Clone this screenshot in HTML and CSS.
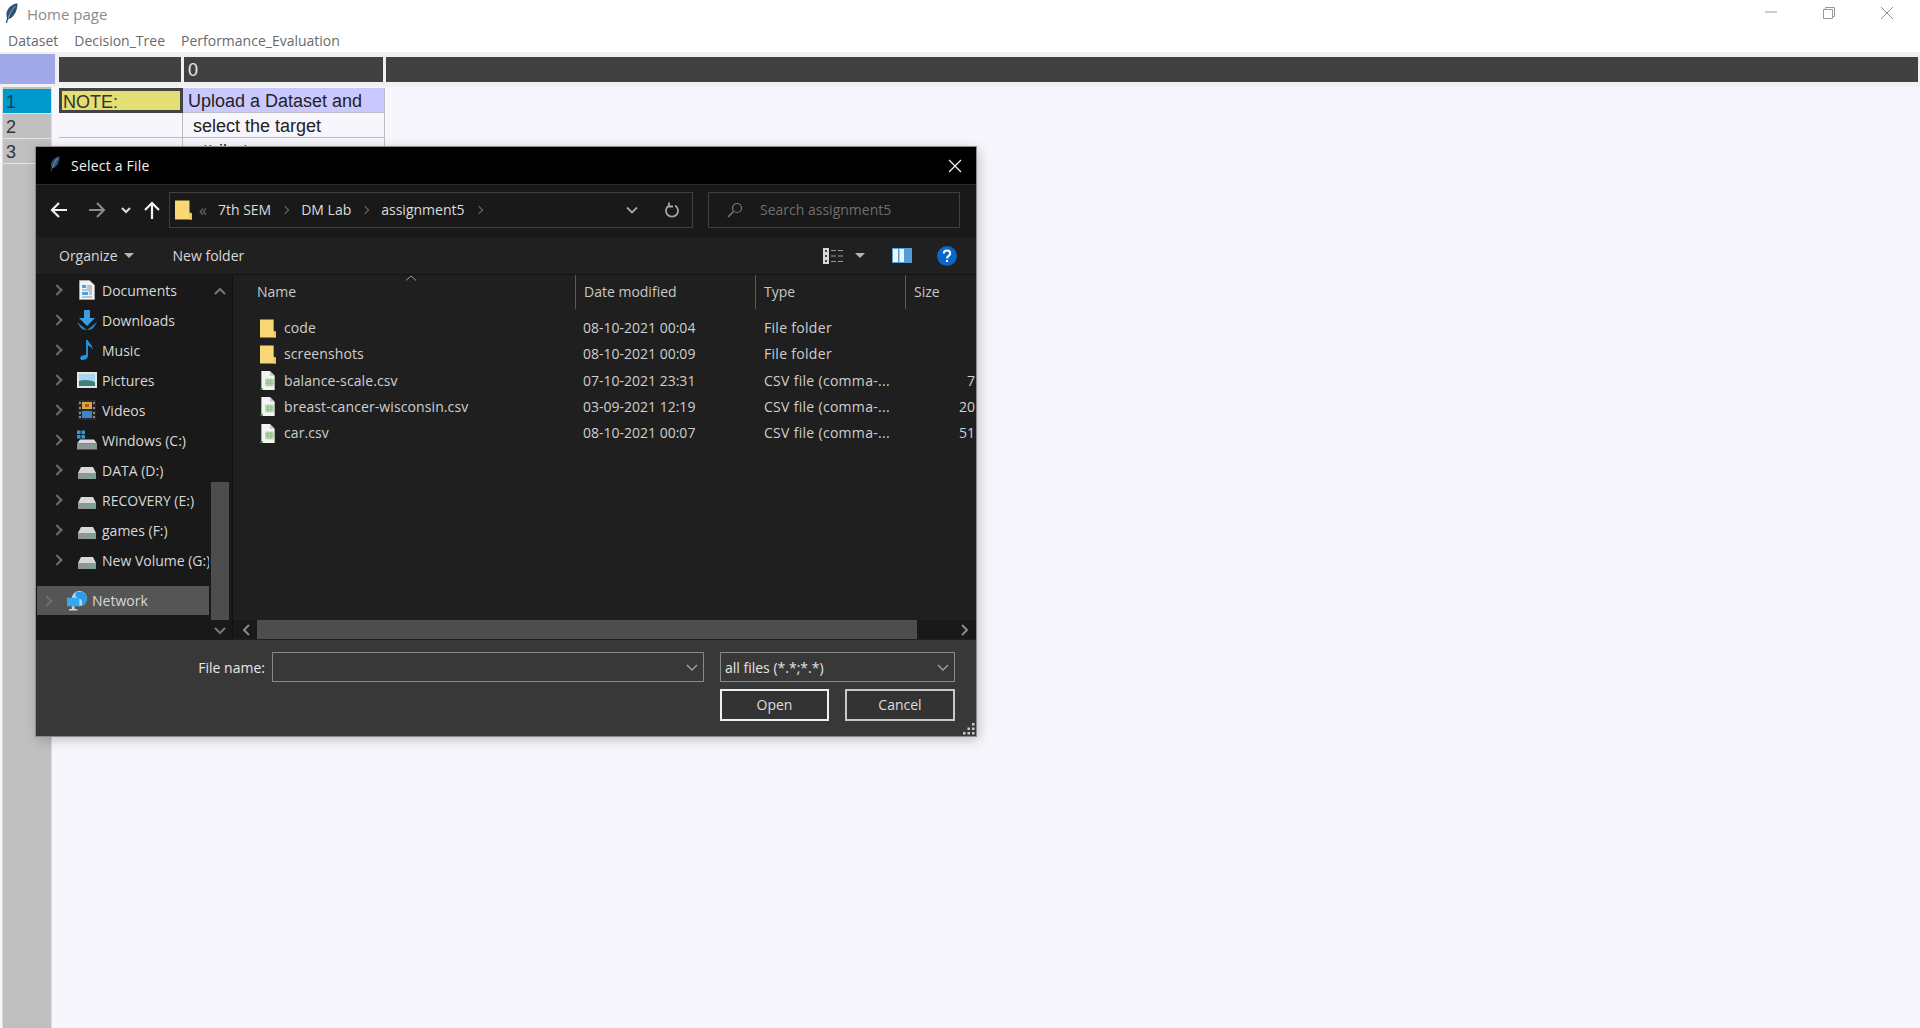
FILE: index.html
```html
<!DOCTYPE html>
<html lang="en">
  <head>
    <meta charset="utf-8">
    <title>Home page</title>
    <link rel="stylesheet" href="styles.css">
  </head>
  <body>
    <svg class="defs" width="0" height="0">
      <symbol id="feather" viewBox="0 0 14 22">
        <path d="M13.500 0C7 1 1.500 6 1.500 12c0 1.500.3 3 .7 4L.8 21l1.200.5L3.500 17C9.500 16 13.500 8 13.500 0z" fill="#2f5178"/>
        <path d="M11 3C8 6 5 11 3.500 16" stroke="#a9c6de" stroke-width=".8" fill="none"/>
      </symbol>
      <symbol id="folder" viewBox="0 0 17 19">
        <path d="M0 0h14.500l0 12 2.500 1v6H0z" fill="#f8d775"/>
        <path d="M14.500 12l2.500 1v6h-2.500z" fill="#eec55c"/>
      </symbol>
      <symbol id="csv" viewBox="0 0 16 20">
        <path d="M1 0h9l5 5v15H1z" fill="#f4f4f4"/>
        <path d="M10 0l5 5h-5z" fill="#c9c9c9"/>
        <path d="M5 8h9v8H5z" fill="#bcdcb4"/>
        <path d="M5 10.500h9M5 13h9M8 8v8M11 8v8" stroke="#7fb477" stroke-width=".7"/>
        <path d="M0 18h2.500v2H0z" fill="#2f8b3c"/>
      </symbol>
      <symbol id="doc" viewBox="0 0 16 20">
        <path d="M.5.500h10l5 4.500v14.500H.5z" fill="#f2f2f2" stroke="#b9b9b9" stroke-width=".6"/>
        <path d="M3 5h4v3H3zM3 12h6v3H3z" fill="#4aa3e0"/>
        <path d="M8 6h5M8 8h5M3 10h10M10 12h3M10 14h3M3 17h10" stroke="#6a8ba8" stroke-width=".9"/>
      </symbol>
      <symbol id="down" viewBox="0 0 20 20">
        <path d="M7 0h6v8h5l-8 8-8-8h5z" fill="#3b9de4"/>
        <path d="M0 12l3 5c1.500 2 3 3 7 3s5.500-1 7-3l3-5-10 8z" fill="#2b83cc"/>
      </symbol>
      <symbol id="music" viewBox="0 0 16 22">
        <path d="M7 0h2c.5 4 6 5 5 11-.5-3-3-4.500-5-5v12c0 2-2.500 4-5.500 4S0 20 1 18.500 4.500 16 7 16.500z" fill="#1e97e8"/>
      </symbol>
      <symbol id="pic" viewBox="0 0 20 16">
        <path d="M0 0h20v16H0z" fill="#e6e6e6"/>
        <path d="M2 2h16v12H2z" fill="#a9d3ee"/>
        <path d="M2 9c5-2 11-1 16 1v4H2z" fill="#3f7f7a"/>
      </symbol>
      <symbol id="video" viewBox="0 0 18 20">
        <path d="M0 0h18v20H0z" fill="#26282c"/>
        <path d="M4 2h10v7H4z" fill="#d8a93a"/>
        <path d="M4 11h10v7H4z" fill="#3a86c9"/>
        <path d="M7 4h4v3H7z" fill="#b8532f"/>
        <path d="M1 2h2v2H1zM1 7h2v2H1zM1 12h2v2H1zM1 16h2v2H1zM15 2h2v2h-2zM15 7h2v2h-2zM15 12h2v2h-2zM15 16h2v2h-2z" fill="#8a8a8a"/>
      </symbol>
      <symbol id="drive" viewBox="0 0 18 12">
        <path d="M3 0h12l3 6H0z" fill="#d8d8d8"/>
        <path d="M0 6h18v6H0z" fill="#8f9698"/>
        <path d="M12 8h3v2h-3z" fill="#35d06a"/>
      </symbol>
      <symbol id="drivec" viewBox="0 0 20 19">
        <path d="M0 0h3.500v3.500H0zM4.500 0H8v3.500H4.500zM0 4.500h3.500V8H0zM4.500 4.500H8V8H4.500z" fill="#21a0e8"/>
        <path d="M3 9h14l3 4H0z" fill="#dcdcdc"/>
        <path d="M0 13h20v6H0z" fill="#8f9698"/>
        <path d="M14 15h3v2h-3z" fill="#35d06a"/>
      </symbol>
      <symbol id="network" viewBox="0 0 21 21">
        <circle cx="13" cy="8" r="8" fill="#a9d9f5"/>
        <path d="M10 1c-2 3-1 5 1 6s5 1 5 5-2 3-3 4c4 0 8-3 8-8 0-3-2-6-5-7z" fill="#2f9ae6"/>
        <path d="M0 7h13v9H0z" fill="#37a7ee"/>
        <path d="M5 16h3v3h3v1.500H2V19h3z" fill="#c9d3da"/>
      </symbol>
    </svg>

    <div class="titlebar">
      <div class="titlebar-left">
        <svg class="app-icon"><use href="#feather"/></svg>
        <span>Home page</span>
      </div>
      <div class="win-controls">
        <svg width="14" height="14" viewBox="0 0 14 14"><path d="M1 6h12" stroke="#9a9a9a"/></svg>
        <svg width="14" height="14" viewBox="0 0 14 14"><path d="M1.500 3.500h9v9h-9zM3.500 3.500v-2h9v9h-2" fill="none" stroke="#9a9a9a"/></svg>
        <svg width="14" height="14" viewBox="0 0 14 14"><path d="M1 1l12 12M13 1L1 13" stroke="#8c8c8c"/></svg>
      </div>
    </div>

    <div class="menubar">
      <span>Dataset</span>
      <span>Decision_Tree</span>
      <span>Performance_Evaluation</span>
    </div>

    <div class="sheet">
      <div class="sheet-head">
        <div class="corner"></div>
        <div class="col-head col-a"></div>
        <div class="col-head col-b">0</div>
        <div class="col-head col-rest"></div>
      </div>
      <div class="sheet-body">
        <div class="row-index">
          <div class="idx idx-active">1</div>
          <div class="idx">2</div>
          <div class="idx">3</div>
        </div>
        <div class="cells">
          <div class="cell-row">
            <div class="cell cell-a cell-note"><span>NOTE:</span></div>
            <div class="cell cell-b cell-lav">Upload a Dataset and</div>
          </div>
          <div class="cell-row">
            <div class="cell cell-a"></div>
            <div class="cell cell-b cell-indent">select the target</div>
          </div>
          <div class="cell-row">
            <div class="cell cell-a"></div>
            <div class="cell cell-b cell-indent">attribute</div>
          </div>
        </div>
      </div>
    </div>

    <div class="dialog">
      <div class="dlg-title">
        <svg class="dlg-feather"><use href="#feather"/></svg>
        <span class="dlg-title-text">Select a File</span>
        <svg class="dlg-close" width="14" height="14" viewBox="0 0 14 14"><path d="M1 1l12 12M13 1L1 13" stroke="#fff" stroke-width="1.100"/></svg>
      </div>

      <div class="dlg-address">
        <div class="nav-btns">
          <svg width="18" height="16" viewBox="0 0 18 16"><path d="M9 1L2 8l7 7M2 8h15" fill="none" stroke="#f2f2f2" stroke-width="2.200"/></svg>
          <svg class="btn-off" width="18" height="16" viewBox="0 0 18 16"><path d="M9 1l7 7-7 7M16 8H1" fill="none" stroke="#8c8c8c" stroke-width="2"/></svg>
          <svg class="btn-more" width="10" height="8" viewBox="0 0 10 8"><path d="M1 2l4 4 4-4" fill="none" stroke="#ddd" stroke-width="2"/></svg>
          <svg class="btn-up" width="16" height="18" viewBox="0 0 16 18"><path d="M1 9l7-7 7 7M8 2v16" fill="none" stroke="#f2f2f2" stroke-width="2.200"/></svg>
        </div>
        <div class="pathbox">
          <svg class="path-folder"><use href="#folder"/></svg>
          <span class="crumb-first">«</span>
          <span class="crumb">7th SEM</span>
          <i class="crumb-chev"></i>
          <span class="crumb">DM Lab</span>
          <i class="crumb-chev"></i>
          <span class="crumb">assignment5</span>
          <i class="crumb-chev"></i>
          <svg class="path-drop" width="12" height="8" viewBox="0 0 12 8"><path d="M1 1.500l5 5 5-5" fill="none" stroke="#a5a5a5" stroke-width="1.800"/></svg>
          <svg class="path-refresh" width="14" height="16" viewBox="0 0 14 16"><path d="M4 3.500a6 6 0 1 0 6 0M4 .5v4h4" fill="none" stroke="#a5a5a5" stroke-width="1.800"/></svg>
        </div>
        <div class="searchbox">
          <svg width="16" height="16" viewBox="0 0 16 16"><circle cx="10" cy="6" r="4.500" fill="none" stroke="#7a7a7a" stroke-width="1.200"/><path d="M6.500 9.500L1 15" stroke="#7a7a7a" stroke-width="1.400"/></svg>
          <span>Search assignment5</span>
        </div>
      </div>

      <div class="dlg-tools">
        <span class="tool-org">Organize</span>
        <i class="caret"></i>
        <span class="tool-new">New folder</span>
        <div class="tool-right">
          <svg width="22" height="16" viewBox="0 0 22 16"><path d="M0 0h6v16H0z" fill="#d8d8d8"/><path d="M2 2h2v2H2zM2 7h2v2H2zM2 12h2v2H2z" fill="#444"/><path d="M8 2.500h5M15 2.500h5M8 8h5M15 8h5M8 13.500h5M15 13.500h5" stroke="#9a9a9a"/></svg>
          <i class="caret view-caret"></i>
          <svg class="pane-icon" width="20" height="15" viewBox="0 0 20 15"><path d="M0 0h20v15H0z" fill="#4f9fe0"/><path d="M1 1h5v13H1zM7.500 1H12v13H7.500z" fill="#f4f4f4"/></svg>
          <svg class="help-icon" width="20" height="20" viewBox="0 0 20 20"><circle cx="10" cy="10" r="10" fill="#0a66c8"/><path d="M6.800 7.500c0-4 6.400-4 6.400 0 0 2.500-3.200 2.300-3.200 5" fill="none" stroke="#fff" stroke-width="2"/><path d="M9 14h2v2H9z" fill="#fff"/></svg>
        </div>
      </div>

      <div class="dlg-main">
        <div class="side">
          <div class="side-scroll">
            <div class="side-list">
              <div class="side-item"><i class="chev"></i><svg class="side-icon"><use href="#doc"/></svg><span>Documents</span></div>
              <div class="side-item"><i class="chev"></i><svg class="side-icon"><use href="#down"/></svg><span>Downloads</span></div>
              <div class="side-item"><i class="chev"></i><svg class="side-icon"><use href="#music"/></svg><span>Music</span></div>
              <div class="side-item"><i class="chev"></i><svg class="side-icon"><use href="#pic"/></svg><span>Pictures</span></div>
              <div class="side-item"><i class="chev"></i><svg class="side-icon"><use href="#video"/></svg><span>Videos</span></div>
              <div class="side-item"><i class="chev"></i><svg class="side-icon"><use href="#drivec"/></svg><span>Windows (C:)</span></div>
              <div class="side-item"><i class="chev"></i><svg class="side-icon drive"><use href="#drive"/></svg><span>DATA (D:)</span></div>
              <div class="side-item"><i class="chev"></i><svg class="side-icon drive"><use href="#drive"/></svg><span>RECOVERY (E:)</span></div>
              <div class="side-item"><i class="chev"></i><svg class="side-icon drive"><use href="#drive"/></svg><span>games (F:)</span></div>
              <div class="side-item"><i class="chev"></i><svg class="side-icon drive"><use href="#drive"/></svg><span>New Volume (G:)</span></div>
              <div class="side-item side-net"><i class="chev"></i><svg class="side-icon"><use href="#network"/></svg><span>Network</span></div>
            </div>
            <div class="side-bar">
              <svg width="12" height="8" viewBox="0 0 12 8"><path d="M1 7l5-5 5 5" fill="none" stroke="#777" stroke-width="2"/></svg>
              <div class="side-thumb"></div>
              <svg width="12" height="8" viewBox="0 0 12 8"><path d="M1 1l5 5 5-5" fill="none" stroke="#777" stroke-width="2"/></svg>
            </div>
          </div>
        </div>

        <div class="files">
          <div class="file-head">
            <div class="fh fh-name">Name<svg class="sort-caret" width="12" height="6" viewBox="0 0 12 6"><path d="M1 5.500l5-4.500 5 4.500" fill="none" stroke="#9a9a9a"/></svg></div>
            <div class="fh">Date modified</div>
            <div class="fh">Type</div>
            <div class="fh">Size</div>
          </div>
          <div class="file-list">
            <div class="file-row">
              <div class="fname"><svg class="ficon"><use href="#folder"/></svg>code</div>
              <div>08-10-2021 00:04</div><div class="ftype">File folder</div><div class="fsize"></div>
            </div>
            <div class="file-row">
              <div class="fname"><svg class="ficon"><use href="#folder"/></svg>screenshots</div>
              <div>08-10-2021 00:09</div><div class="ftype">File folder</div><div class="fsize"></div>
            </div>
            <div class="file-row">
              <div class="fname"><svg class="ficon"><use href="#csv"/></svg>balance-scale.csv</div>
              <div>07-10-2021 23:31</div><div class="ftype">CSV file (comma-...</div><div class="fsize">7</div>
            </div>
            <div class="file-row">
              <div class="fname"><svg class="ficon"><use href="#csv"/></svg>breast-cancer-wisconsin.csv</div>
              <div>03-09-2021 12:19</div><div class="ftype">CSV file (comma-...</div><div class="fsize">20</div>
            </div>
            <div class="file-row">
              <div class="fname"><svg class="ficon"><use href="#csv"/></svg>car.csv</div>
              <div>08-10-2021 00:07</div><div class="ftype">CSV file (comma-...</div><div class="fsize">51</div>
            </div>
          </div>
          <div class="hscroll">
            <svg width="8" height="12" viewBox="0 0 8 12"><path d="M7 1L2 6l5 5" fill="none" stroke="#8a8a8a" stroke-width="2"/></svg>
            <div class="hthumb"></div>
            <svg width="8" height="12" viewBox="0 0 8 12"><path d="M1 1l5 5-5 5" fill="none" stroke="#8a8a8a" stroke-width="2"/></svg>
          </div>
        </div>
      </div>

      <div class="dlg-foot">
        <div class="foot-row">
          <label class="foot-label" for="file_name">File name:</label>
          <div class="combo combo-name">
            <input id="file_name" type="text">
            <svg width="12" height="7" viewBox="0 0 12 7"><path d="M1 1l5 5 5-5" fill="none" stroke="#a5a5a5" stroke-width="1.300"/></svg>
          </div>
          <div class="combo combo-type">
            <span>all files (*.*;*.*)</span>
            <svg width="12" height="7" viewBox="0 0 12 7"><path d="M1 1l5 5 5-5" fill="none" stroke="#a5a5a5" stroke-width="1.300"/></svg>
          </div>
        </div>
        <div class="foot-btns">
          <button class="btn btn-open">Open</button>
          <button class="btn">Cancel</button>
        </div>
        <svg class="grip" width="13" height="13" viewBox="0 0 13 13"><path d="M10 1h2.500v2.500H10zM5.500 5.500H8V8H5.500zM10 5.500h2.500V8H10zM1 10h2.500v2.500H1zM5.500 10H8v2.500H5.500zM10 10h2.500v2.500H10z" fill="#c9c9c9"/></svg>
      </div>
    </div>
  </body>
</html>
```

FILE: styles.css
```css
html, body {
  height: 100%;
}

body {
  margin: 0;
  display: flex;
  flex-direction: column;
  overflow: hidden;
  background: #fff;
  font-family: "Open Sans", "Noto Sans", sans-serif;
}

.defs {
  position: absolute;
}

/* top window chrome */
.titlebar {
  height: 27px;
  display: flex;
  justify-content: space-between;
  align-items: center;
  flex: none;
}

.titlebar-left {
  display: flex;
  align-items: center;
  padding-left: 5px;
  color: #8a8a8a;
  font-size: 15px;
}

.app-icon {
  width: 13px;
  height: 21px;
  margin-right: 9px;
}

.win-controls {
  display: flex;
  gap: 44px;
  padding-right: 26px;
  padding-bottom: 1px;
}

.menubar {
  height: 25px;
  display: flex;
  align-items: center;
  flex: none;
  padding-left: 8px;
  padding-top: 2px;
  box-sizing: border-box;
  gap: 16px;
  color: #6a6a6a;
  font-size: 14px;
}

/* table behind the dialog */
.sheet {
  flex: 1;
  display: flex;
  flex-direction: column;
  background: #f6f6fc;
  font-family: "Liberation Sans", Arial, sans-serif;
}

.sheet-head {
  height: 35px;
  flex: none;
  display: flex;
  background: #f0f0f0;
  padding-top: 2px;
  box-sizing: border-box;
}

.corner {
  width: 55px;
  height: 30px;
  background: #a0a8e8;
  margin-right: 4px;
}

.col-head {
  height: 25px;
  margin-top: 3px;
  background: #414141;
  color: #e8e8e8;
  font-size: 18px;
  line-height: 27px;
  box-sizing: border-box;
}

.col-a {
  width: 122px;
}

.col-b {
  width: 199px;
  margin-left: 3px;
  padding-left: 4px;
}

.col-rest {
  flex: 1;
  margin-left: 3px;
  margin-right: 2px;
}

.sheet-body {
  flex: 1;
  display: flex;
}

.row-index {
  width: 48px;
  margin-left: 3px;
  background: #c0c0c0;
  box-shadow: -1px 0 0 #dcdcdc, 1px 0 0 #dcdcdc;
  padding-top: 2px;
}

.idx {
  height: 24px;
  margin-bottom: 1px;
  padding-left: 3px;
  color: #333;
  font-size: 18px;
  line-height: 27px;
  background: #c0c0c0;
  box-shadow: 0 1px 0 #e4e4e4;
}

.idx-active {
  background: #0099cc;
  color: #1a3f55;
}

.cells {
  margin-left: 8px;
  padding-top: 1px;
}

.cell-row {
  display: flex;
  height: 25px;
}

.cell {
  box-sizing: border-box;
  height: 25px;
  border-bottom: 1px solid #bdbdbd;
  font-size: 18px;
  line-height: 27px;
  color: #222;
}

.cell-a {
  width: 124px;
  border-right: 1px solid #bdbdbd;
}

.cell-b {
  width: 202px;
  border-right: 1px solid #bdbdbd;
  padding-left: 5px;
}

.cell-note {
  background: #e3df72;
  border: 3px solid #444;
  line-height: 22px;
  padding-left: 1px;
  color: #333;
  overflow: hidden;
}

.cell-lav {
  background: #c9c9ff;
}

.cell-indent {
  padding-left: 10px;
}

/* file dialog, a window floating over the sheet */
.dialog {
  position: absolute;
  left: 36px;
  top: 147px;
  width: 940px;
  height: 589px;
  display: flex;
  flex-direction: column;
  background: #1f1f1f;
  color: #d8d8d8;
  font-size: 14px;
  box-shadow: 0 0 0 1px #8c8c8c, 2px 3px 12px rgba(0, 0, 0, .25);
}

.dlg-title {
  height: 38px;
  flex: none;
  display: flex;
  align-items: center;
  background: #000;
  color: #f2f2f2;
  border-bottom: 1px solid #2b2b2b;
  box-sizing: border-box;
}

.dlg-feather {
  width: 10px;
  height: 16px;
  margin-left: 14px;
  margin-bottom: 4px;
}

.dlg-title-text {
  margin-left: 11px;
  letter-spacing: .2px;
}

.dlg-close {
  margin-left: auto;
  margin-right: 14px;
}

.dlg-address {
  height: 52px;
  flex: none;
  display: flex;
  align-items: center;
  padding-bottom: 3px;
  box-sizing: border-box;
  background: #191919;
}

.nav-btns {
  width: 133px;
  display: flex;
  align-items: center;
  padding-left: 14px;
  box-sizing: border-box;
}

.btn-off {
  margin-left: 20px;
}

.btn-more {
  margin-left: 15px;
}

.btn-up {
  margin-left: 13px;
}

.pathbox {
  width: 524px;
  height: 36px;
  box-sizing: border-box;
  border: 1px solid #3f3f3f;
  display: flex;
  align-items: center;
  padding-left: 5px;
  color: #dcdcdc;
}

.path-folder {
  width: 17px;
  height: 20px;
}

.crumb-first {
  margin: 0 11px 0 7px;
  color: #6f6f6f;
  font-size: 16px;
  line-height: 1;
}

.crumb-chev {
  flex: none;
  width: 5px;
  height: 5px;
  margin: 0 13px 0 11px;
  border-top: 1.500px solid #6f6f6f;
  border-right: 1.500px solid #6f6f6f;
  transform: rotate(45deg);
}

.path-drop {
  margin-left: auto;
}

.path-refresh {
  margin-left: 27px;
  margin-right: 13px;
}

.searchbox {
  width: 252px;
  height: 36px;
  margin-left: 15px;
  box-sizing: border-box;
  border: 1px solid #3f3f3f;
  display: flex;
  align-items: center;
  padding-left: 18px;
  gap: 17px;
  color: #6f6f6f;
}

.dlg-tools {
  height: 38px;
  flex: none;
  display: flex;
  align-items: center;
  background: #202020;
  padding-left: 23px;
  padding-right: 19px;
  border-bottom: 1px solid #141414;
  box-sizing: border-box;
}

.caret {
  width: 0;
  height: 0;
  margin-left: 6px;
  border-left: 5px solid transparent;
  border-right: 5px solid transparent;
  border-top: 5px solid #b5b5b5;
}

.tool-new {
  margin-left: 39px;
}

.tool-right {
  margin-left: auto;
  display: flex;
  align-items: center;
}

.view-caret {
  margin-left: 10px;
}

.pane-icon {
  margin-left: 27px;
}

.help-icon {
  margin-left: 25px;
}

.dlg-main {
  flex: 1;
  display: flex;
  min-height: 0;
}

.side {
  width: 197px;
  flex: none;
  background: #191919;
  border-right: 1px solid #111;
  box-sizing: border-box;
}

.side-scroll {
  height: 100%;
  display: flex;
}

.side-list {
  width: 173px;
  overflow: hidden;
  box-sizing: border-box;
}

.side-item {
  height: 30px;
  display: flex;
  align-items: center;
  padding-left: 19px;
  white-space: nowrap;
}

.side-net {
  margin-top: 11px;
  padding-left: 8px;
  margin-left: 1px;
  height: 29px;
  background: #555;
}

.chev {
  flex: none;
  width: 6px;
  height: 6px;
  margin-left: -2px;
  margin-right: 16px;
  border-top: 2px solid #6e6e6e;
  border-right: 2px solid #6e6e6e;
  transform: rotate(45deg);
}

.side-icon {
  flex: none;
  width: 20px;
  height: 20px;
  margin-right: 5px;
}

.side-icon.drive {
  height: 12px;
  margin-top: 6px;
}

.side-bar {
  width: 18px;
  margin-left: 2px;
  height: 100%;
  display: flex;
  flex-direction: column;
  align-items: center;
  padding-top: 12px;
  padding-bottom: 5px;
  box-sizing: border-box;
}

.side-thumb {
  width: 18px;
  height: 138px;
  margin-top: 187px;
  margin-bottom: auto;
  background: #4d4d4d;
}

.files {
  flex: 1;
  min-width: 0;
  display: flex;
  flex-direction: column;
  background: #1f1f1f;
}

.file-head,
.file-row {
  display: grid;
  grid-template-columns: 342px 180px 150px 71px;
}

.file-head {
  height: 34px;
  box-sizing: border-box;
  color: #c8c8c8;
}

.fh {
  position: relative;
  border-left: 1px solid #5a5a5a;
  padding-left: 8px;
  line-height: 34px;
}

.fh-name {
  border-left: none;
  padding-left: 24px;
}

.sort-caret {
  position: absolute;
  left: 172px;
  top: 0;
}

.file-list {
  flex: 1;
  padding-top: 6px;
}

.file-row {
  height: 26.25px;
  line-height: 26px;
  color: #cfcfcf;
}

.file-row > div {
  padding-left: 8px;
  white-space: nowrap;
}

.file-row > .fname {
  display: flex;
  align-items: center;
  padding-left: 27px;
  letter-spacing: .1px;
}

.file-row > .ftype {
  padding-left: 9px;
  letter-spacing: .3px;
}

.file-row > .fsize {
  padding-left: 0;
  padding-right: 1px;
  text-align: right;
}

.ficon {
  width: 16px;
  height: 19px;
  margin-right: 8px;
}

.hscroll {
  height: 19px;
  flex: none;
  margin-bottom: 1px;
  display: flex;
  align-items: center;
  background: #191919;
  padding-left: 9px;
  padding-right: 7px;
}

.hthumb {
  width: 660px;
  height: 19px;
  margin-left: 7px;
  margin-right: auto;
  background: #4d4d4d;
}

.dlg-foot {
  position: relative;
  height: 96px;
  flex: none;
  background: #383838;
  padding-top: 12px;
  box-sizing: border-box;
}

.foot-row {
  display: flex;
  align-items: center;
}

.foot-label {
  width: 229px;
  text-align: right;
  margin-right: 7px;
  color: #e8e8e8;
}

.combo {
  height: 30px;
  box-sizing: border-box;
  display: flex;
  align-items: center;
  justify-content: space-between;
  padding-right: 5px;
  border: 1px solid #8a8a8a;
  color: #e4e4e4;
}

.combo input {
  flex: 1;
  height: 100%;
  border: none;
  background: transparent;
  outline: none;
}

.combo-name {
  width: 432px;
}

.combo-type {
  width: 235px;
  margin-left: 16px;
  padding-left: 4px;
}

.foot-btns {
  display: flex;
  justify-content: flex-end;
  gap: 16px;
  margin-top: 7px;
  padding-right: 21px;
}

.btn {
  width: 110px;
  height: 32px;
  background: #333;
  border: 2px solid #c8c8c8;
  color: #dcdcdc;
  font: inherit;
  padding: 0 0 2px;
}

.btn-open {
  width: 109px;
  border-color: #f0f0f0;
}

.grip {
  position: absolute;
  right: 1px;
  bottom: 1px;
}
```
